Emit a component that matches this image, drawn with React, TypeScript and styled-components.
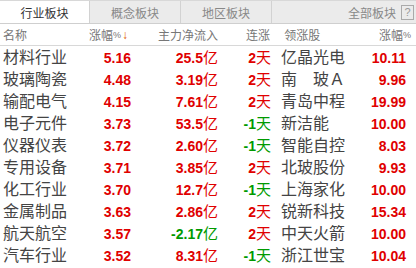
import React from 'react';
import styled, { createGlobalStyle } from 'styled-components';

const GlobalStyle = createGlobalStyle`
  html, body {
    margin: 0;
    padding: 0;
    background: #fff;
  }
  body {
    font-family: "Liberation Sans", "Noto Sans CJK SC", sans-serif;
  }
`;

const RED = '#e00000';
const GREEN = '#009a00';

const Panel = styled.div`
  width: 416px;
  height: 268px;
  overflow: hidden;
  background: #fff;
`;

const TabBar = styled.div`
  display: flex;
  height: 22px;
  background: #ebebeb;
  border-top: 1px solid #d8d8d8;
  border-bottom: 1px solid #cfcfcf;
  box-sizing: content-box;
`;

const Tab = styled.div<{ $active?: boolean; $w: number }>`
  width: ${(p) => p.$w}px;
  display: flex;
  align-items: center;
  justify-content: center;
  font-size: 12px;
  color: ${(p) => (p.$active ? '#333' : '#888')};
  background: ${(p) => (p.$active ? '#fff' : 'transparent')};
  border-right: 1px solid #d2d2d2;
`;

const TabFill = styled.div`
  flex: 1;
  display: flex;
  align-items: center;
  justify-content: flex-end;
  font-size: 12px;
  color: #888;
  padding-right: 2px;
  gap: 5px;
`;

const HelpBox = styled.span`
  width: 11px;
  height: 13px;
  border: 1px solid #aaa;
  font-size: 11px;
  color: #999;
  display: flex;
  align-items: center;
  justify-content: center;
  line-height: 1;
`;

const cols = '90px 38px 87px 53px 10px 80px 45px';

const HeaderRow = styled.div`
  display: grid;
  grid-template-columns: ${cols};
  padding-left: 3px;
  height: 21px;
  align-items: center;
  border-bottom: 1px solid #d8d8d8;
  font-size: 12px;
  color: #777;
`;

const HeadCell = styled.div<{ $align?: 'left' | 'right'; $shift?: number }>`
  text-align: ${(p) => p.$align ?? 'right'};
  white-space: nowrap;
  margin-right: ${(p) => p.$shift ?? 0}px;
  display: flex;
  align-items: center;
  justify-content: ${(p) => (p.$align === 'left' ? 'flex-start' : 'flex-end')};
`;

const Pct = styled.span`
  font-size: 9px;
`;

const Arrow = styled.span`
  color: #e05a00;
  font-size: 12px;
  margin-left: 1px;
`;

const Body = styled.div`
  padding-top: 1px;
`;

const Row = styled.div`
  display: grid;
  grid-template-columns: ${cols};
  padding-left: 3px;
  height: 22px;
  align-items: center;
  white-space: nowrap;
`;

const Name = styled.div`
  font-size: 16px;
  color: #444;
  line-height: 22px;
`;

const Num = styled.div<{ $up: boolean }>`
  text-align: right;
  font-size: 14px;
  font-weight: bold;
  color: ${(p) => (p.$up ? RED : GREEN)};
  line-height: 22px;
`;

const Unit = styled.span`
  font-size: 15px;
  font-weight: normal;
`;

const Stock = styled(Name)`
  grid-column: 6;
`;

type Item = {
  name: string;
  zf: string;
  flow: string;
  days: string;
  stock: string;
  szf: string;
};

const data: Item[] = [
  { name: '材料行业', zf: '5.16', flow: '25.5', days: '2', stock: '亿晶光电', szf: '10.11' },
  { name: '玻璃陶瓷', zf: '4.48', flow: '3.19', days: '2', stock: '南　玻Ａ', szf: '9.96' },
  { name: '输配电气', zf: '4.15', flow: '7.61', days: '2', stock: '青岛中程', szf: '19.99' },
  { name: '电子元件', zf: '3.73', flow: '53.5', days: '-1', stock: '新洁能', szf: '10.00' },
  { name: '仪器仪表', zf: '3.72', flow: '2.60', days: '-1', stock: '智能自控', szf: '8.03' },
  { name: '专用设备', zf: '3.71', flow: '3.85', days: '2', stock: '北玻股份', szf: '9.93' },
  { name: '化工行业', zf: '3.70', flow: '12.7', days: '-1', stock: '上海家化', szf: '10.00' },
  { name: '金属制品', zf: '3.63', flow: '2.86', days: '2', stock: '锐新科技', szf: '15.34' },
  { name: '航天航空', zf: '3.57', flow: '-2.17', days: '2', stock: '中天火箭', szf: '10.00' },
  { name: '汽车行业', zf: '3.52', flow: '8.31', days: '-1', stock: '浙江世宝', szf: '10.04' },
];

export default function App() {
  return (
    <Panel>
      <GlobalStyle />
      <TabBar>
        <Tab $active $w={89}>行业板块</Tab>
        <Tab $w={90}>概念板块</Tab>
        <Tab $w={90}>地区板块</Tab>
        <TabFill>
          全部板块
          <HelpBox>?</HelpBox>
        </TabFill>
      </TabBar>
      <HeaderRow>
        <HeadCell $align="left">名称</HeadCell>
        <HeadCell $shift={3}>
          涨幅<Pct>%</Pct>
          <Arrow>↓</Arrow>
        </HeadCell>
        <HeadCell>主力净流入</HeadCell>
        <HeadCell $shift={1}>连涨</HeadCell>
        <span />
        <HeadCell $align="left">&nbsp;领涨股</HeadCell>
        <HeadCell $shift={-5}>
          涨幅<Pct>%</Pct>
        </HeadCell>
      </HeaderRow>
      <Body>
        {data.map((d) => (
          <Row key={d.name}>
            <Name>{d.name}</Name>
            <Num $up>{d.zf}</Num>
            <Num $up={!d.flow.startsWith('-')}>
              {d.flow}
              <Unit>亿</Unit>
            </Num>
            <Num $up={!d.days.startsWith('-')}>
              {d.days}
              <Unit>天</Unit>
            </Num>
            <Stock>{d.stock}</Stock>
            <Num $up>{d.szf}</Num>
          </Row>
        ))}
      </Body>
    </Panel>
  );
}
